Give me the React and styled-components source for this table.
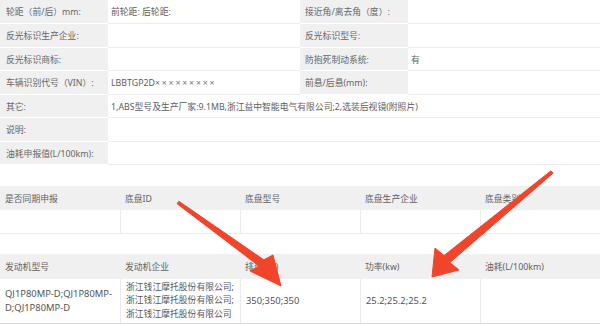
import React from "react";
import styled, { createGlobalStyle } from "styled-components";

const GlobalStyle = createGlobalStyle`
  html, body {
    margin: 0;
    padding: 0;
    background: #ffffff;
  }
  body {
    font-family: "Noto Sans", "Noto Sans CJK SC", sans-serif;
  }
`;

const infoRows = [
  { label: "轮距（前/后）mm:", value: "前轮距: 后轮距:", label2: "接近角/离去角（度）:", value2: "", h: 24 },
  { label: "反光标识生产企业:", value: "", label2: "反光标识型号:", value2: "", h: 24 },
  { label: "反光标识商标:", value: "", label2: "防抱死制动系统:", value2: "有", h: 23 },
  { label: "车辆识别代号（VIN）:", value: "LBBTGP2D", masked: "×××××××××", label2: "前悬/后悬(mm):", value2: "", h: 24 },
  { label: "其它:", value: "1,ABS型号及生产厂家:9.1MB,浙江益中智能电气有限公司;2,选装后视镜(附照片)", h: 23 },
  { label: "说明:", value: "", h: 24 },
  { label: "油耗申报值(L/100km):", value: "", h: 23 },
];

const chassisHead = ["是否同期申报", "底盘ID", "底盘型号", "底盘生产企业", "底盘类别"];

const engineHead = ["发动机型号", "发动机企业", "排量(ml)", "功率(kw)", "油耗(L/100km)"];
const engineRow = [
  { lines: ["QJ1P80MP-D;QJ1P80MP-D;QJ1P80MP-D"], wrap: true },
  { lines: ["浙江钱江摩托股份有限公司;", "浙江钱江摩托股份有限公司;", "浙江钱江摩托股份有限公司"], small: true },
  { lines: ["350;350;350"] },
  { lines: ["25.2;25.2;25.2"] },
  { lines: [] },
];

export default function App() {
  return (
    <Page>
      <GlobalStyle />
      <InfoTable $rows={infoRows.map((r) => `${r.h}px`).join(" ")}>
        {infoRows.map((r) =>
          r.label2 !== undefined ? (
            <React.Fragment key={r.label}>
              <Label>{r.label}</Label>
              <Value>
                {r.value}
                {r.masked && <Masked>{r.masked}</Masked>}
              </Value>
              <Label $right>{r.label2}</Label>
              <Value>{r.value2}</Value>
            </React.Fragment>
          ) : (
            <React.Fragment key={r.label}>
              <Label>{r.label}</Label>
              <Value $span={3}>{r.value}</Value>
            </React.Fragment>
          )
        )}
      </InfoTable>

      <DataTable $gap="21px" $body="23px">
        {chassisHead.map((h) => (
          <HeadCell key={h}>{h}</HeadCell>
        ))}
        {chassisHead.map((h) => (
          <BodyCell key={h} />
        ))}
      </DataTable>

      <DataTable $gap="20px" $body="44px" $bottom>
        {engineHead.map((h) => (
          <HeadCell key={h}>{h}</HeadCell>
        ))}
        {engineRow.map((cell, i) => (
          <BodyCell key={i}>
            <CellText $small={cell.small}>
              {cell.lines.map((l, j) => (
                <Line key={j} $wrap={cell.wrap}>
                  {l}
                </Line>
              ))}
            </CellText>
          </BodyCell>
        ))}
      </DataTable>

      {/* red markup arrows drawn over the tables */}
      <Marks viewBox="0 0 600 324">
        <polygon points="177.1,203.7 259.2,266.2 250,271 281,286 273,255 263.8,259.8 178.9,201.3" />
        <polygon points="551,170.8 444.1,255.5 435,248 432,277 459,270 449.9,262.5 553,173.2" />
      </Marks>
    </Page>
  );
}

const Page = styled.div`
  position: relative;
  width: 600px;
  height: 324px;
  overflow: hidden;
  background: #ffffff;
`;

const InfoTable = styled.div`
  display: grid;
  grid-template-columns: 108px 192px 108px 192px;
  grid-template-rows: ${({ $rows }) => $rows};
`;

const Label = styled.div`
  display: flex;
  align-items: center;
  padding-left: ${({ $right }) => ($right ? "5px" : "6px")};
  background: #f0f0f0;
  border-bottom: 1px solid #ffffff;
  color: #666666;
  font-size: 8.8px;
  white-space: nowrap;
  overflow: hidden;
`;

const Value = styled.div`
  display: flex;
  align-items: center;
  grid-column: span ${({ $span }) => $span || 1};
  padding-left: 3px;
  border-bottom: 1px solid #ececec;
  color: #5c5c5c;
  font-size: 8.8px;
  white-space: nowrap;
  overflow: hidden;
`;

const Masked = styled.span`
  letter-spacing: 1.8px;
  color: #777777;
`;

const DataTable = styled.div`
  display: grid;
  grid-template-columns: repeat(5, 120px);
  grid-template-rows: ${({ $bottom }) => ($bottom ? "25px" : "24px")} ${({ $body }) => $body};
  margin-top: ${({ $gap }) => $gap};
  border-bottom: ${({ $bottom }) => ($bottom ? "2px solid #dcdcdc" : "1px solid #ececec")};
`;

const HeadCell = styled.div`
  display: flex;
  align-items: center;
  padding-left: 5px;
  background: #f0f0f0;
  color: #5f5f5f;
  font-size: 8.8px;
  white-space: nowrap;
`;

const BodyCell = styled.div`
  display: flex;
  align-items: center;
  padding: 0 5px;
  background: #ffffff;
  border-left: 1px solid #ebebeb;
  color: #555555;

  &:nth-child(6) {
    border-left: none;
  }
`;

const CellText = styled.div`
  font-size: ${({ $small }) => ($small ? "8.8px" : "9.4px")};
  line-height: ${({ $small }) => ($small ? "13.5px" : "14px")};
`;

const Line = styled.div`
  white-space: ${({ $wrap }) => ($wrap ? "normal" : "nowrap")};
`;

const Marks = styled.svg`
  position: absolute;
  left: 0;
  top: 0;
  width: 600px;
  height: 324px;
  pointer-events: none;

  polygon {
    fill: #f0452b;
    stroke: #f0452b;
    stroke-width: 1;
    stroke-linejoin: round;
  }
`;
